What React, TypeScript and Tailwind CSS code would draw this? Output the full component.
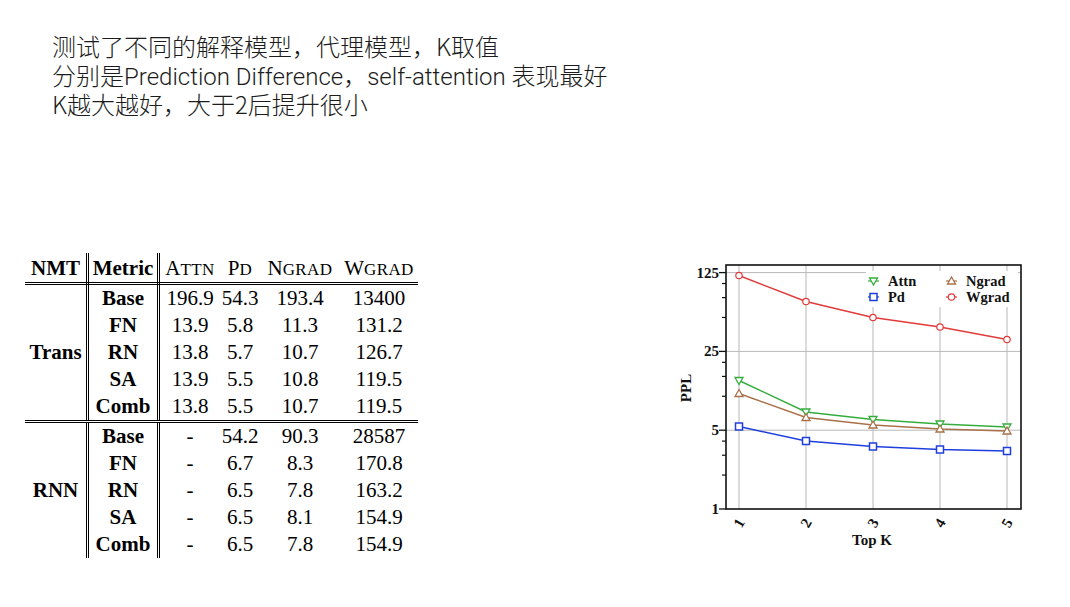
import React from "react";

const CJK = { fontFamily: '"Noto Sans CJK SC", "Noto Sans", sans-serif' };
const LAT = { fontFamily: 'Roboto, "Noto Sans CJK SC", sans-serif' };
const SERIF = { fontFamily: '"Liberation Serif", "Times New Roman", serif' };

const cols = "grid grid-cols-[61px_71px_63px_40px_80px_78px]";
const dbl = "border-l-[3px] border-double border-black";

type Row = [string, string, string, string, string];

const trans: Row[] = [
  ["Base", "196.9", "54.3", "193.4", "13400"],
  ["FN", "13.9", "5.8", "11.3", "131.2"],
  ["RN", "13.8", "5.7", "10.7", "126.7"],
  ["SA", "13.9", "5.5", "10.8", "119.5"],
  ["Comb", "13.8", "5.5", "10.7", "119.5"],
];
const rnn: Row[] = [
  ["Base", "-", "54.2", "90.3", "28587"],
  ["FN", "-", "6.7", "8.3", "170.8"],
  ["RN", "-", "6.5", "7.8", "163.2"],
  ["SA", "-", "6.5", "8.1", "154.9"],
  ["Comb", "-", "6.5", "7.8", "154.9"],
];

function Group({ label, rows }: { label: string; rows: Row[] }) {
  return (
    <div className={cols + " auto-rows-[27px] leading-[27px]"}>
      <div className="row-span-5 flex items-center justify-center font-bold">{label}</div>
      {rows.map((r, i) => (
        <React.Fragment key={i}>
          <div className={dbl + " flex items-center justify-center font-bold"}>{r[0]}</div>
          <div className={dbl + " flex items-center justify-center"}>{r[1]}</div>
          <div className="flex items-center justify-center">{r[2]}</div>
          <div className="flex items-center justify-center">{r[3]}</div>
          <div className="flex items-center justify-center">{r[4]}</div>
        </React.Fragment>
      ))}
    </div>
  );
}

function SC({ a, rest }: { a: string; rest: string }) {
  return (
    <span>
      {a}
      <span className="text-[17px] tracking-[0.4px]">{rest}</span>
    </span>
  );
}

function Table() {
  return (
    <div className="w-[393px] text-[21px] text-black" style={SERIF}>
      <div className={cols + " h-[29px]"}>
        <div className="flex items-center justify-center font-bold">NMT</div>
        <div className={dbl + " flex items-center justify-center font-bold"}>Metric</div>
        <div className={dbl + " flex items-center justify-center"}>
          <SC a="A" rest="TTN" />
        </div>
        <div className="flex items-center justify-center">
          <SC a="P" rest="D" />
        </div>
        <div className="flex items-center justify-center">
          <SC a="N" rest="GRAD" />
        </div>
        <div className="flex items-center justify-center">
          <SC a="W" rest="GRAD" />
        </div>
      </div>
      <div className="border-t-[3px] border-double border-black" />
      <Group label="Trans" rows={trans} />
      <div className="border-t-[3px] border-double border-black" />
      <Group label="RNN" rows={rnn} />
    </div>
  );
}

const XS = [739, 806, 873, 940, 1007];
const yv = (v: number) => 509 - 78.8 * (Math.log(v) / Math.log(5));

const series = {
  wgrad: [275.5, 301.5, 317.5, 327, 339.5],
  attn: [380.5, 412, 419.5, 424, 427],
  ngrad: [393.5, 417.5, 425, 429, 431],
  pd: [426.5, 441, 446.5, 449.5, 451],
};
const C = { red: "#e23b3b", green: "#34ad3c", brown: "#a8714a", blue: "#1f3fdc" };

function pts(ys: number[]) {
  return ys.map((y, i) => `${XS[i]},${y}`).join(" ");
}
function Down({ x, y, c }: { x: number; y: number; c: string }) {
  return <polygon points={`${x - 4},${y - 3} ${x + 4},${y - 3} ${x},${y + 4}`} fill="white" stroke={c} strokeWidth={1.3} />;
}
function Up({ x, y, c }: { x: number; y: number; c: string }) {
  return <polygon points={`${x - 4},${y + 3} ${x + 4},${y + 3} ${x},${y - 4}`} fill="white" stroke={c} strokeWidth={1.3} />;
}
function Sq({ x, y, c }: { x: number; y: number; c: string }) {
  return <rect x={x - 3.5} y={y - 3.5} width={7} height={7} fill="white" stroke={c} strokeWidth={1.5} />;
}
function Ci({ x, y, c }: { x: number; y: number; c: string }) {
  return <circle cx={x} cy={y} r={3.2} fill="white" stroke={c} strokeWidth={1.2} />;
}

function Chart() {
  const minor = [2, 3, 4, 10, 15, 20, 50, 75, 100];
  const major: [number, string][] = [
    [1, "1"],
    [5, "5"],
    [25, "25"],
    [125, "125"],
  ];
  const lab = { fontFamily: '"Liberation Serif", serif', fontWeight: 700, fontSize: 15 };
  const leg = { fontFamily: '"Liberation Serif", serif', fontWeight: 700, fontSize: 14.5 };
  return (
    <svg width={350} height={300} viewBox="676 258 350 300" className="mt-[5px] ml-[258px] block">
      {XS.map((x) => (
        <line key={x} x1={x} y1={265} x2={x} y2={509} stroke="#b8b8b8" strokeWidth={1} />
      ))}
      {[5, 25, 125].map((v) => (
        <line key={v} x1={726} y1={yv(v)} x2={1021} y2={yv(v)} stroke="#b8b8b8" strokeWidth={1} />
      ))}
      <rect x={866} y={271} width={152} height={36} fill="white" />
      {minor.map((v) => (
        <line key={v} x1={722} y1={yv(v)} x2={726} y2={yv(v)} stroke="#111" strokeWidth={1.2} />
      ))}
      {major.map(([v, t]) => (
        <g key={t}>
          <line x1={719} y1={yv(v)} x2={726} y2={yv(v)} stroke="#111" strokeWidth={1.3} />
          <text x={719} y={yv(v) + 5} textAnchor="end" style={lab} fill="#111">
            {t}
          </text>
        </g>
      ))}
      <polyline points={pts(series.wgrad)} fill="none" stroke={C.red} strokeWidth={1.4} />
      <polyline points={pts(series.attn)} fill="none" stroke={C.green} strokeWidth={1.4} />
      <polyline points={pts(series.ngrad)} fill="none" stroke={C.brown} strokeWidth={1.4} />
      <polyline points={pts(series.pd)} fill="none" stroke={C.blue} strokeWidth={1.4} />
      {XS.map((x, i) => (
        <g key={x}>
          <Ci x={x} y={series.wgrad[i]} c={C.red} />
          <Down x={x} y={series.attn[i]} c={C.green} />
          <Up x={x} y={series.ngrad[i]} c={C.brown} />
          <Sq x={x} y={series.pd[i]} c={C.blue} />
        </g>
      ))}
      <rect x={726} y={265} width={295} height={244} fill="none" stroke="#111" strokeWidth={1.6} />
      <line x1={868} y1={281} x2={879} y2={281} stroke={C.green} strokeWidth={1.2} />
      <Down x={873.5} y={281} c={C.green} />
      <text x={888} y={286} style={leg} fill="#111">Attn</text>
      <line x1={868} y1={297} x2={879} y2={297} stroke={C.blue} strokeWidth={1.2} />
      <Sq x={873.5} y={297} c={C.blue} />
      <text x={888} y={302} style={leg} fill="#111">Pd</text>
      <line x1={946} y1={281} x2={957} y2={281} stroke={C.brown} strokeWidth={1.2} />
      <Up x={951.5} y={281} c={C.brown} />
      <text x={966} y={286} style={leg} fill="#111">Ngrad</text>
      <line x1={946} y1={297} x2={957} y2={297} stroke={C.red} strokeWidth={1.2} />
      <Ci x={951.5} y={297} c={C.red} />
      <text x={966} y={302} style={leg} fill="#111">Wgrad</text>
      {XS.map((x, i) => (
        <text
          key={x}
          x={0}
          y={5}
          textAnchor="middle"
          style={lab}
          fill="#111"
          transform={`translate(${x} 523) rotate(-60)`}
        >
          {i + 1}
        </text>
      ))}
      <text x={872} y={545} textAnchor="middle" style={lab} fill="#111">Top K</text>
      <text x={0} y={0} textAnchor="middle" style={lab} fill="#111" transform="translate(691 388) rotate(-90)">
        PPL
      </text>
    </svg>
  );
}

export default function App() {
  return (
    <div className="w-[1070px] h-[607px] bg-white overflow-hidden flex flex-col">
      <div className="pl-[52px] pt-[31px] text-[24px] leading-[29px] text-[#1c1c1c] font-light" style={CJK}>
        <div className="h-[29px] whitespace-nowrap">测试了不同的解释模型，代理模型，K取值</div>
        <div className="h-[29px] whitespace-nowrap">
          分别是<span style={LAT}>Prediction Difference</span>，<span style={LAT}>self-attention </span>表现最好
        </div>
        <div className="h-[29px] whitespace-nowrap">K越大越好，大于2后提升很小</div>
      </div>
      <div className="flex items-start mt-[135px]">
        <div className="ml-[25px]">
          <Table />
        </div>
        <Chart />
      </div>
    </div>
  );
}
